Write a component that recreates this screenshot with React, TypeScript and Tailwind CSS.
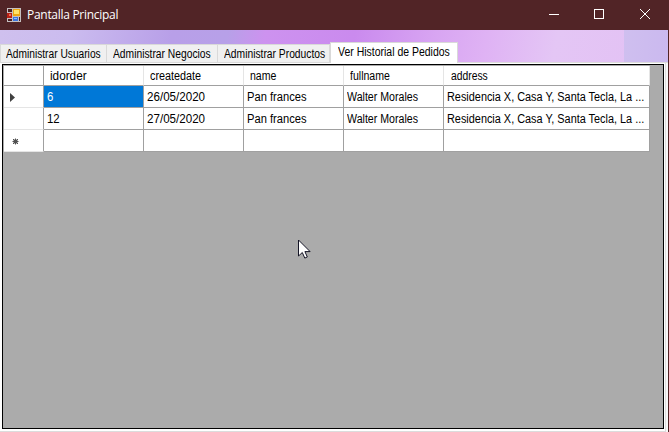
import React from 'react';

const rows = [
  { id: '6', date: '26/05/2020', selected: true },
  { id: '12', date: '27/05/2020', selected: false },
];

function AppIcon() {
  return (
    <svg width="14" height="14" viewBox="0 0 14 14" shapeRendering="crispEdges">
      <rect width="14" height="14" fill="#c5bfc0" />
      <rect x="1" y="1" width="4" height="3" fill="#4a2022" />
      <rect x="0" y="5" width="5" height="5" fill="#b81f14" />
      <rect x="2" y="6" width="2" height="2" fill="#ef6b55" />
      <rect x="1" y="11" width="4" height="2" fill="#4a2022" />
      <rect x="6" y="1" width="7" height="7" fill="#eda713" />
      <rect x="7" y="2" width="5" height="4" fill="#ffe36b" />
      <rect x="6" y="9" width="5" height="4" fill="#3b75dc" />
      <rect x="7" y="10" width="3" height="1" fill="#91baff" />
      <rect x="12" y="9" width="1" height="4" fill="#4a2022" />
    </svg>
  );
}

function TitleBar() {
  return (
    <header className="flex h-[30px] shrink-0 items-center bg-[#512426] pl-[7px] text-white">
      <AppIcon />
      <span className="ml-[6px] whitespace-nowrap font-['Open_Sans',sans-serif] text-[12px] leading-[30px] tracking-[-0.29px]">Pantalla Principal</span>
      <div className="ml-auto flex h-full items-center">
        <svg width="120" height="30" fill="none" stroke="#fff" shapeRendering="crispEdges">
          <path d="M0 14.5h10M45.5 9.5h9v9h-9z" />
          <path d="M91 9l10 10M101 9l-10 10" shapeRendering="auto" />
        </svg>
      </div>
    </header>
  );
}

function Label({ text, scale }: { text: string; scale: string }) {
  return <span className={'inline-block origin-left ' + scale}>{text}</span>;
}

function Tab({ label, scale, className }: { label: string; scale: string; className: string }) {
  return (
    <div className={'h-[19px] shrink-0 whitespace-nowrap border-r border-y border-[#d9d9d9] bg-[#f0f0f0] leading-[19px] ' + className}>
      <Label text={label} scale={scale} />
    </div>
  );
}

function Tabs() {
  return (
    <nav className="flex h-[33px] shrink-0 items-end bg-[linear-gradient(100deg,#cfc0ee_0px,#cbbcef_70px,#b89fe8_170px,#b7a0e8_225px,#cd92ef_262px,#ca8aee_350px,#d8a5f2_430px,#dfb2f4_480px,#e4c6f5_550px,#e3c2f4_625px,#e1baf3_635px)]">
      <Tab label="Administrar Usuarios" scale="scale-x-[0.85]" className="w-[107px] border-l pl-[5px]" />
      <Tab label="Administrar Negocios" scale="scale-x-[0.857]" className="w-[111px] pl-[6px]" />
      <Tab label="Administrar Productos" scale="scale-x-[0.857]" className="w-[112px] pl-[6px]" />
      <div className="h-[21px] w-[128px] shrink-0 whitespace-nowrap border-x border-t border-[#d9d9d9] bg-white pl-[7px] leading-[18px]">
        <Label text="Ver Historial de Pedidos" scale="scale-x-[0.873]" />
      </div>
      <div className="flex h-full grow flex-col items-end border-b border-[#dcdcdc]">
        <div className="w-[44px] grow bg-[linear-gradient(90deg,#cfbfef,#cbb9ef)]" />
      </div>
    </nav>
  );
}

const columns = 'grid grid-cols-[40px_100px_100px_100px_100px_206px]';
const cellBox = 'overflow-hidden whitespace-nowrap border-b border-r border-[#a0a0a0] pl-[3px] pt-[2px] leading-[19px] ';
const cell = cellBox + 'bg-white';
const head = 'whitespace-nowrap border-b border-r border-b-[#a0a0a0] border-r-[#e5e5e5] bg-white pt-[2px] leading-[17px] ';

function Grid() {
  return (
    <section className="w-[662px] grow border border-black bg-[#ababab] pl-px pt-px">
      <div className={columns + ' h-[20px]'}>
        <div className="border-b border-r border-[#a0a0a0] bg-white" />
        <div className={head + 'pl-[6px]'}><Label text="idorder" scale="scale-x-[0.98]" /></div>
        <div className={head + 'pl-[6px]'}><Label text="createdate" scale="scale-x-[0.9]" /></div>
        <div className={head + 'pl-[6px]'}><Label text="name" scale="scale-x-[0.88]" /></div>
        <div className={head + 'pl-[6px]'}><Label text="fullname" scale="scale-x-[0.88]" /></div>
        <div className={head + 'pl-[7px]'}><Label text="address" scale="scale-x-[0.86]" /></div>
      </div>
      {rows.map((r) => (
        <div key={r.id} className={columns + ' h-[22px]'}>
          <div className="flex items-center border-b border-r border-b-[#e5e5e5] border-r-[#a0a0a0] bg-white pl-[6px] pt-px">
            {r.selected && (
              <svg width="5" height="9" fill="#404040"><path d="M0 0v9l5-4.5z" /></svg>
            )}
          </div>
          <div className={r.selected ? cellBox + 'bg-[#0078d7] text-white' : cell}><Label text={r.id} scale="scale-x-[0.95]" /></div>
          <div className={cell}><Label text={r.date} scale="scale-x-[0.967]" /></div>
          <div className={cell}><Label text="Pan frances" scale="scale-x-[0.93]" /></div>
          <div className={cell}><Label text="Walter Morales" scale="scale-x-[0.885]" /></div>
          <div className={cell}><Label text="Residencia X, Casa Y, Santa Tecla, La ..." scale="scale-x-[0.907]" /></div>
        </div>
      ))}
      <div className={columns + ' h-[22px]'}>
        <div className="flex items-center border-b border-r border-b-[#e5e5e5] border-r-[#a0a0a0] bg-white pl-[8px] pt-[2px]">
          <svg width="7" height="7" fill="none" stroke="#505050">
            <path d="M3.5 0.5v6M0.5 3.5h6M1 1l5 5M6 1l-5 5" />
            <circle cx="3.5" cy="3.5" r="1.8" fill="#505050" />
          </svg>
        </div>
        <div className={cell} /><div className={cell} /><div className={cell} /><div className={cell} /><div className={cell} />
      </div>
    </section>
  );
}

export default function App() {
  return (
    <div className="relative flex h-[432px] w-[669px] flex-col overflow-hidden bg-[#512426] font-['Liberation_Sans',Arial,sans-serif] text-[12px] text-black">
      <TitleBar />
      <main className="flex w-[668px] grow flex-col bg-[#f8f8f8]">
        <Tabs />
        <div className="flex w-[666px] grow flex-col border-b border-r border-[#dcdcdc] bg-white pb-[2px] pl-[2px] pt-px">
          <Grid />
        </div>
      </main>
      <svg className="absolute left-[298px] top-[239px]" width="13" height="21" viewBox="0 0 13 21">
        <path d="M.5 1v16l3.8-3.5 2.5 5.6 2.5-1.1-2.4-5.4h5.2z" fill="#fff" stroke="#151526" />
      </svg>
    </div>
  );
}
